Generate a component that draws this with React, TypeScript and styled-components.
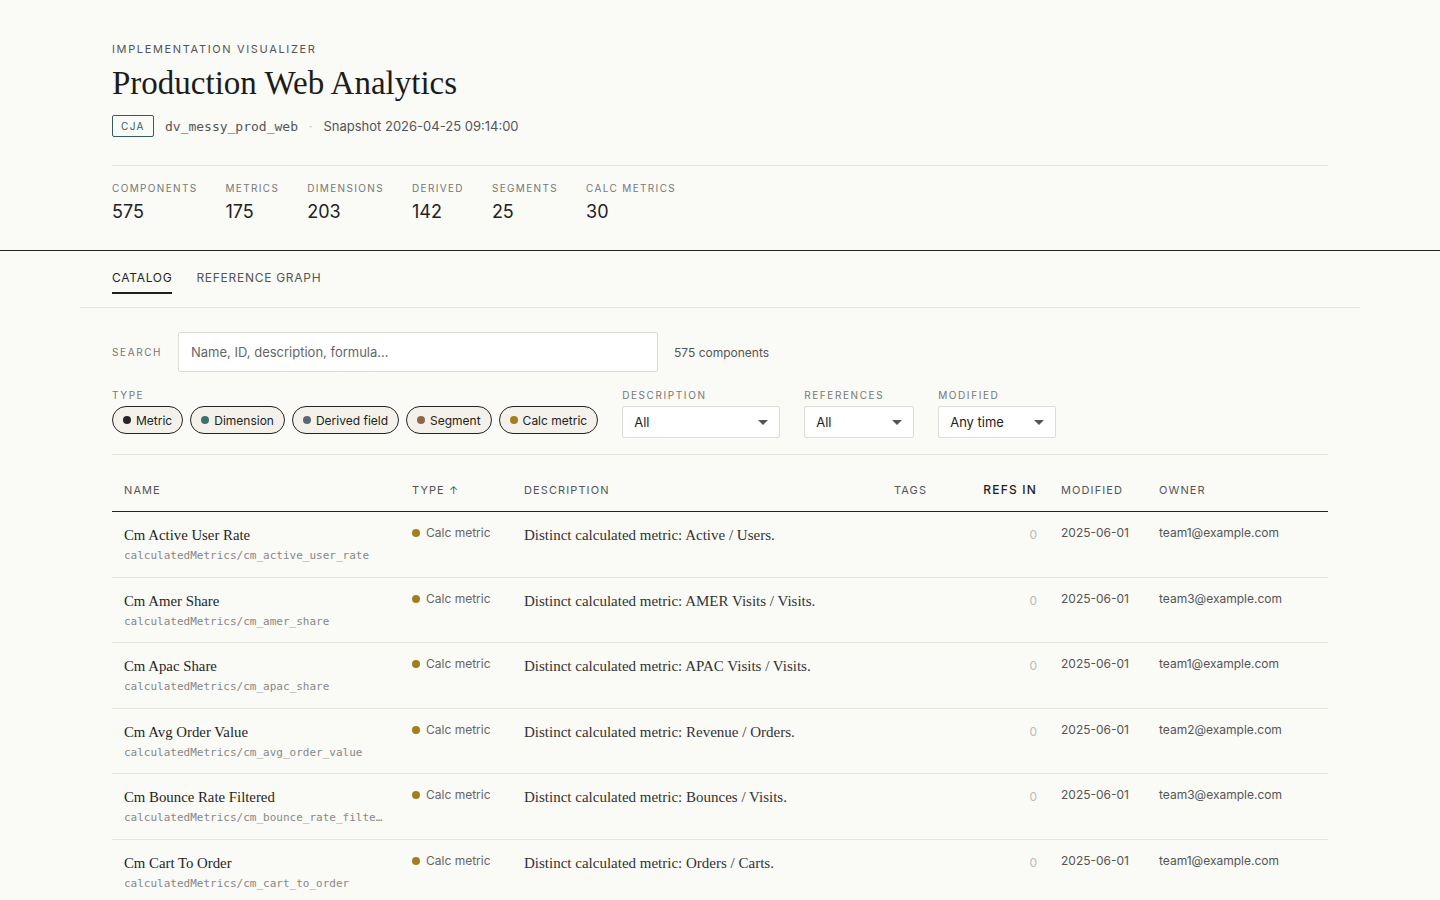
import React from "react";
import styled, { createGlobalStyle } from "styled-components";

const GlobalStyle = createGlobalStyle`
  html, body {
    margin: 0;
    padding: 0;
    background: #fafaf6;
    color: #1f1f1f;
    font-family: Inter, "Noto Sans", sans-serif;
  }
  * { box-sizing: border-box; }
`;

type Kind = "metric" | "dimension" | "derived" | "segment" | "calc";

const kindColor: Record<Kind, string> = {
  metric: "#262626",
  dimension: "#41716c",
  derived: "#5b6677",
  segment: "#8c6649",
  calc: "#a17f1e",
};

const stats = [
  { label: "Components", value: 575 },
  { label: "Metrics", value: 175 },
  { label: "Dimensions", value: 203 },
  { label: "Derived", value: 142 },
  { label: "Segments", value: 25 },
  { label: "Calc metrics", value: 30 },
];

const chips: { kind: Kind; label: string }[] = [
  { kind: "metric", label: "Metric" },
  { kind: "dimension", label: "Dimension" },
  { kind: "derived", label: "Derived field" },
  { kind: "segment", label: "Segment" },
  { kind: "calc", label: "Calc metric" },
];

const rows = [
  { name: "Cm Active User Rate", id: "calculatedMetrics/cm_active_user_rate", desc: "Distinct calculated metric: Active / Users.", owner: "team1@example.com" },
  { name: "Cm Amer Share", id: "calculatedMetrics/cm_amer_share", desc: "Distinct calculated metric: AMER Visits / Visits.", owner: "team3@example.com" },
  { name: "Cm Apac Share", id: "calculatedMetrics/cm_apac_share", desc: "Distinct calculated metric: APAC Visits / Visits.", owner: "team1@example.com" },
  { name: "Cm Avg Order Value", id: "calculatedMetrics/cm_avg_order_value", desc: "Distinct calculated metric: Revenue / Orders.", owner: "team2@example.com" },
  { name: "Cm Bounce Rate Filtered", id: "calculatedMetrics/cm_bounce_rate_filtered", desc: "Distinct calculated metric: Bounces / Visits.", owner: "team3@example.com" },
  { name: "Cm Cart To Order", id: "calculatedMetrics/cm_cart_to_order", desc: "Distinct calculated metric: Orders / Carts.", owner: "team1@example.com" },
];

const columns = [
  { key: "name", label: "Name", width: 288 },
  { key: "type", label: "Type ↑", width: 112 },
  { key: "desc", label: "Description", width: 370 },
  { key: "tags", label: "Tags", width: 87 },
  { key: "refs", label: "Refs in", width: 80 },
  { key: "modified", label: "Modified", width: 98 },
  { key: "owner", label: "Owner", width: 181 },
];

const App = () => {
  return (
    <>
      <GlobalStyle />
      <Header>
        <Inner>
          <Eyebrow>Implementation Visualizer</Eyebrow>
          <Title>Production Web Analytics</Title>
          <Meta>
            <Badge>CJA</Badge>
            <Mono>dv_messy_prod_web</Mono>
            <Sep>·</Sep>
            <Snapshot>Snapshot 2026-04-25 09:14:00</Snapshot>
          </Meta>
          <Stats>
            {stats.map((s) => (
              <Stat key={s.label}>
                <StatLabel>{s.label}</StatLabel>
                <StatValue>{s.value}</StatValue>
              </Stat>
            ))}
          </Stats>
        </Inner>
      </Header>

      <Main>
        <Tabs>
          <Tab $active>Catalog</Tab>
          <Tab>Reference graph</Tab>
        </Tabs>

        <Content>
          <SearchRow>
            <FieldLabel>Search</FieldLabel>
            <SearchInput placeholder="Name, ID, description, formula..." />
            <Count>575 components</Count>
          </SearchRow>

          <Filters>
            <FilterGroup>
              <FilterLabel>Type</FilterLabel>
              <ChipRow>
                {chips.map((c) => (
                  <Chip key={c.kind}>
                    <Dot $color={kindColor[c.kind]} />
                    {c.label}
                  </Chip>
                ))}
              </ChipRow>
            </FilterGroup>
            <FilterGroup>
              <FilterLabel>Description</FilterLabel>
              <Select $width={158}>
                All
                <Caret />
              </Select>
            </FilterGroup>
            <FilterGroup>
              <FilterLabel>References</FilterLabel>
              <Select $width={110}>
                All
                <Caret />
              </Select>
            </FilterGroup>
            <FilterGroup>
              <FilterLabel>Modified</FilterLabel>
              <Select $width={118}>
                Any time
                <Caret />
              </Select>
            </FilterGroup>
          </Filters>

          <Table>
            <colgroup>
              {columns.map((c) => (
                <col key={c.key} style={{ width: c.width }} />
              ))}
            </colgroup>
            <thead>
              <tr>
                {columns.map((c) => (
                  <Th key={c.key} $right={c.key === "refs"} $strong={c.key === "refs"}>
                    {c.label}
                  </Th>
                ))}
              </tr>
            </thead>
            <tbody>
              {rows.map((r) => (
                <tr key={r.id}>
                  <Td>
                    <Name>{r.name}</Name>
                    <Id>{r.id}</Id>
                  </Td>
                  <Td>
                    <TypeCell>
                      <Dot $color={kindColor.calc} />
                      Calc metric
                    </TypeCell>
                  </Td>
                  <Td>
                    <Desc>{r.desc}</Desc>
                  </Td>
                  <Td />
                  <Td $right>
                    <Refs>0</Refs>
                  </Td>
                  <Td>
                    <Small>2025-06-01</Small>
                  </Td>
                  <Td>
                    <Small>{r.owner}</Small>
                  </Td>
                </tr>
              ))}
            </tbody>
          </Table>
        </Content>
      </Main>
    </>
  );
};

export default App;

const Header = styled.header`
  border-bottom: 1px solid #222;
`;

const Inner = styled.div`
  max-width: 1280px;
  margin: 0 auto;
  padding: 41px 32px 26px;
`;

const Eyebrow = styled.div`
  font-size: 11px;
  line-height: 16px;
  letter-spacing: 0.15em;
  text-transform: uppercase;
  color: #555;
`;

const Title = styled.h1`
  margin: 6px 0 12px;
  font-family: "Liberation Serif", serif;
  font-weight: 400;
  font-size: 33px;
  line-height: 40px;
  color: #1c1c1c;
`;

const Meta = styled.div`
  display: flex;
  align-items: center;
  gap: 11px;
  height: 22px;
  padding-bottom: 28px;
  border-bottom: 1px solid #e6e6df;
  box-sizing: content-box;
`;

const Badge = styled.span`
  display: inline-flex;
  align-items: center;
  height: 22px;
  padding: 0 8px;
  border: 1px solid #2f5e5c;
  border-radius: 2px;
  font-size: 10px;
  letter-spacing: 0.14em;
  color: #2f5e5c;
`;

const Mono = styled.span`
  font-family: "DejaVu Sans Mono", "Liberation Mono", monospace;
  font-size: 13px;
  color: #555;
`;

const Sep = styled.span`
  color: #bbb;
  font-size: 12px;
`;

const Snapshot = styled.span`
  font-size: 13px;
  color: #555;
`;

const Stats = styled.div`
  display: flex;
  gap: 28px;
  padding-top: 15px;
`;

const Stat = styled.div`
  display: flex;
  flex-direction: column;
  gap: 5px;
`;

const StatLabel = styled.div`
  font-size: 10px;
  line-height: 14px;
  letter-spacing: 0.135em;
  text-transform: uppercase;
  color: #777;
`;

const StatValue = styled.div`
  font-size: 18px;
  line-height: 24px;
  color: #222;
`;

const Main = styled.main`
  max-width: 1280px;
  margin: 0 auto;
`;

const Tabs = styled.nav`
  display: flex;
  gap: 24px;
  padding: 19px 32px 13px;
  border-bottom: 1px solid #e6e6df;
`;

const Tab = styled.button<{ $active?: boolean }>`
  padding: 0 0 6px;
  border: 0;
  border-bottom: 2px solid ${(p) => (p.$active ? "#1f1f1f" : "transparent")};
  background: none;
  font-family: Inter, sans-serif;
  font-size: 12px;
  line-height: 16px;
  letter-spacing: 0.06em;
  text-transform: uppercase;
  color: ${(p) => (p.$active ? "#1f1f1f" : "#555")};
  cursor: pointer;
`;

const Content = styled.section`
  padding: 24px 32px 0;
`;

const SearchRow = styled.div`
  display: flex;
  align-items: center;
  gap: 16px;
`;

const FieldLabel = styled.label`
  width: 50px;
  font-size: 10px;
  letter-spacing: 0.16em;
  text-transform: uppercase;
  color: #777;
`;

const SearchInput = styled.input`
  width: 480px;
  height: 40px;
  padding: 0 12px;
  border: 1px solid #ddddd7;
  border-radius: 2px;
  background: #fff;
  font-family: Inter, sans-serif;
  font-size: 13px;
  color: #222;
  outline: none;
  &::placeholder {
    color: #666;
  }
`;

const Count = styled.span`
  font-size: 12px;
  color: #555;
`;

const Filters = styled.div`
  display: flex;
  align-items: flex-end;
  gap: 24px;
  margin-top: 17px;
  padding-bottom: 16px;
  border-bottom: 1px solid #e6e6df;
`;

const FilterGroup = styled.div`
  display: flex;
  flex-direction: column;
  gap: 5px;
`;

const FilterLabel = styled.div`
  font-size: 10px;
  line-height: 12px;
  letter-spacing: 0.16em;
  text-transform: uppercase;
  color: #777;
`;

const ChipRow = styled.div`
  display: flex;
  gap: 7px;
  padding-bottom: 4px;
`;

const Chip = styled.button`
  display: inline-flex;
  align-items: center;
  gap: 5px;
  height: 28px;
  padding: 0 10px;
  border: 1px solid #222;
  border-radius: 14px;
  background: #f3f1ea;
  font-family: Inter, sans-serif;
  font-size: 12px;
  color: #222;
`;

const Dot = styled.span<{ $color: string }>`
  width: 8px;
  height: 8px;
  border-radius: 50%;
  background: ${(p) => p.$color};
  flex-shrink: 0;
`;

const Select = styled.div<{ $width: number }>`
  position: relative;
  display: flex;
  align-items: center;
  width: ${(p) => p.$width}px;
  height: 32px;
  padding: 0 11px;
  border: 1px solid #ddddd7;
  border-radius: 2px;
  background: #fff;
  font-size: 13px;
  color: #222;
`;

const Caret = styled.span`
  position: absolute;
  right: 11px;
  top: 13px;
  border-left: 5px solid transparent;
  border-right: 5px solid transparent;
  border-top: 5px solid #555;
`;

const Table = styled.table`
  width: 100%;
  border-collapse: collapse;
  table-layout: fixed;
`;

const Th = styled.th<{ $right?: boolean; $strong?: boolean }>`
  padding: 28px 12px 14px;
  border-bottom: 1px solid #222;
  text-align: ${(p) => (p.$right ? "right" : "left")};
  font-size: ${(p) => (p.$strong ? "12px" : "11px")};
  font-weight: ${(p) => (p.$strong ? 500 : 400)};
  line-height: 14px;
  letter-spacing: 0.1em;
  text-transform: uppercase;
  color: ${(p) => (p.$strong ? "#1f1f1f" : "#555")};
`;

const Td = styled.td<{ $right?: boolean }>`
  padding: 13px 12px 13.5px;
  border-bottom: 1px solid #e6e6df;
  vertical-align: top;
  text-align: ${(p) => (p.$right ? "right" : "left")};
`;

const Name = styled.div`
  font-family: "Liberation Serif", serif;
  font-size: 14.8px;
  line-height: 20px;
  color: #1f1f1f;
`;

const Id = styled.div`
  margin-top: 4px;
  font-family: "DejaVu Sans Mono", "Liberation Mono", monospace;
  font-size: 11px;
  line-height: 14px;
  color: #888;
  white-space: nowrap;
  overflow: hidden;
  text-overflow: ellipsis;
`;

const TypeCell = styled.div`
  display: flex;
  align-items: center;
  gap: 6px;
  font-size: 12px;
  line-height: 16px;
  color: #666;
  white-space: nowrap;
`;

const Desc = styled.div`
  font-family: "Liberation Serif", serif;
  font-size: 15px;
  line-height: 20px;
  color: #333;
`;

const Refs = styled.div`
  padding-top: 2px;
  font-size: 12px;
  line-height: 16px;
  color: #bbb;
`;

const Small = styled.div`
  font-size: 12px;
  line-height: 16px;
  color: #555;
`;
